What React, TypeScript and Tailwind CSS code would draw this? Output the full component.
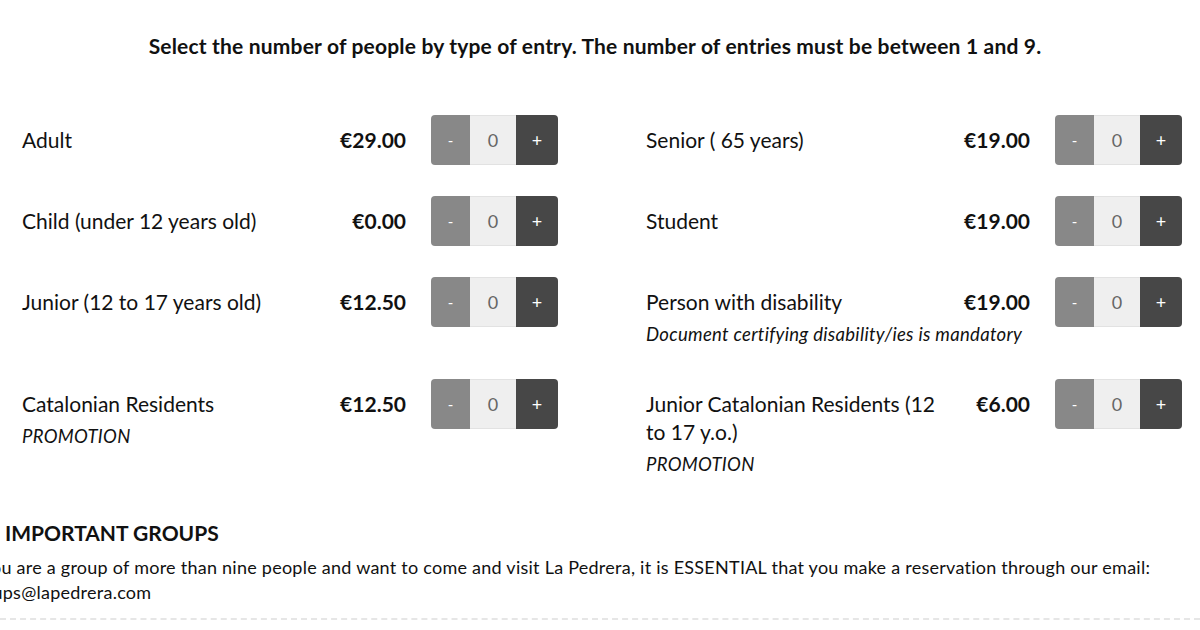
import { useState } from 'react';

interface Ticket {
    id: string;
    label: string;
    price: string;
    note?: string;
}

const leftTickets: Ticket[] = [
    { id: 'adult', label: 'Adult', price: '€29.00' },
    { id: 'child', label: 'Child (under 12 years old)', price: '€0.00' },
    { id: 'junior', label: 'Junior (12 to 17 years old)', price: '€12.50' },
    { id: 'cat', label: 'Catalonian Residents', price: '€12.50', note: 'PROMOTION' },
];

const rightTickets: Ticket[] = [
    { id: 'senior', label: 'Senior ( 65 years)', price: '€19.00' },
    { id: 'student', label: 'Student', price: '€19.00' },
    { id: 'disability', label: 'Person with disability', price: '€19.00', note: 'Document certifying disability/ies is mandatory' },
    { id: 'jcat', label: 'Junior Catalonian Residents (12 to 17 y.o.)', price: '€6.00', note: 'PROMOTION' },
];

const Stepper = ({ value, onChange }: { value: number; onChange: (v: number) => void }) => (
    <div className="flex h-[50px] w-[127px] shrink-0 rounded overflow-hidden">
        <button
            onClick={() => onChange(Math.max(0, value - 1))}
            className="w-[39px] bg-[#888888] text-white text-[15px]"
        >
            -
        </button>
        <div className="w-[46px] bg-[#efefef] border-y border-[#e2e2e2] flex items-center justify-center text-[18px] text-[#666]">
            {value}
        </div>
        <button
            onClick={() => onChange(Math.min(9, value + 1))}
            className="flex-1 bg-[#474747] text-white text-[18px]"
        >
            +
        </button>
    </div>
);

const TicketRow = ({ ticket, value, onChange }: { ticket: Ticket; value: number; onChange: (v: number) => void }) => (
    <div className="flex items-start pl-[22px] pr-[66px] pb-[31px]">
        <div className="flex-1 pt-[11px]">
            <div className="flex items-start">
                <div className="flex-1 pr-2 text-[21px] leading-[28px] text-[#111]">{ticket.label}</div>
                <div className="w-[80px] text-right text-[21px] leading-[28px] font-bold text-[#111]">
                    {ticket.price}
                </div>
            </div>
            {ticket.note && (
                <div className="mt-[4px] text-[18.5px] leading-[28px] tracking-[0.3px] italic text-[#111]">{ticket.note}</div>
            )}
        </div>
        <div className="ml-[25px]">
            <Stepper value={value} onChange={onChange} />
        </div>
    </div>
);

const App = () => {
    const [counts, setCounts] = useState<Record<string, number>>({});
    const set = (id: string) => (v: number) => setCounts(c => ({ ...c, [id]: v }));

    return (
        <div className="w-[1200px] h-[630px] overflow-hidden bg-white font-['Lato',sans-serif] text-[#111]">
            <h1 className="pt-[33px] pr-[10px] text-center text-[21px] leading-[26px] tracking-[0.18px] font-bold">
                Select the number of people by type of entry. The number of entries must be between 1 and 9.
            </h1>

            <div className="mt-[56px] grid grid-cols-[624px_624px]">
                {leftTickets.map((t, i) => (
                    <div key={t.id} className="contents">
                        <TicketRow ticket={t} value={counts[t.id] ?? 0} onChange={set(t.id)} />
                        <TicketRow ticket={rightTickets[i]} value={counts[rightTickets[i].id] ?? 0} onChange={set(rightTickets[i].id)} />
                    </div>
                ))}
            </div>

            <div className="pt-[10px]">
                <h2 className="pl-[5px] text-[21px] leading-[28px] font-bold">
                    IMPORTANT GROUPS
                </h2>
                <p className="-ml-[34px] mt-[8px] w-[1240px] text-[18px] leading-[25px] tracking-[0.25px]">
                    If you are a group of more than nine people and want to come and visit La Pedrera, it is ESSENTIAL that you make a reservation through our email: groups@lapedrera.com
                </p>
                <div className="mt-[13px] border-t-2 border-dashed border-[#e6e6e6]" />
            </div>
        </div>
    );
};

export default App;
